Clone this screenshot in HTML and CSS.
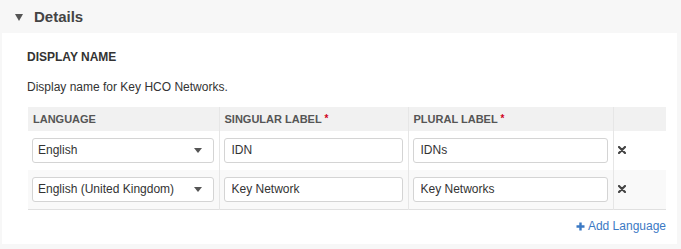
FILE: index.html
```html
<!DOCTYPE html>
<html lang="en">

<head>
  <meta charset="UTF-8">
  <meta name="viewport" content="width=device-width, initial-scale=1.0">
  <title>Details</title>
  <link rel="stylesheet" href="styles.css">
</head>

<body>

  <div class="section-header">
    <span class="caret"></span>
    <span class="section-title">Details</span>
  </div>

  <div class="panel">
    <h3 class="field-title">DISPLAY NAME</h3>
    <p class="field-help">Display name for Key HCO Networks.</p>

    <table class="lang-table">
      <colgroup>
        <col class="col-lang">
        <col class="col-singular">
        <col class="col-plural">
        <col class="col-action">
      </colgroup>
      <thead>
        <tr>
          <th>LANGUAGE</th>
          <th>SINGULAR LABEL <span class="required">*</span></th>
          <th>PLURAL LABEL <span class="required">*</span></th>
          <th></th>
        </tr>
      </thead>
      <tbody>
        <tr>
          <td>
            <div class="select">
              <span>English</span>
              <span class="select-arrow"></span>
            </div>
          </td>
          <td><input class="text-input" type="text" value="IDN"></td>
          <td><input class="text-input" type="text" value="IDNs"></td>
          <td class="action-cell">
            <svg class="remove-icon" width="8" height="8" viewBox="0 0 8 8">
              <path d="M1 1 L7 7 M7 1 L1 7" stroke="#444" stroke-width="2.2" stroke-linecap="round" />
            </svg>
          </td>
        </tr>
        <tr>
          <td>
            <div class="select">
              <span>English (United Kingdom)</span>
              <span class="select-arrow"></span>
            </div>
          </td>
          <td><input class="text-input" type="text" value="Key Network"></td>
          <td><input class="text-input" type="text" value="Key Networks"></td>
          <td class="action-cell">
            <svg class="remove-icon" width="8" height="8" viewBox="0 0 8 8">
              <path d="M1 1 L7 7 M7 1 L1 7" stroke="#444" stroke-width="2.2" stroke-linecap="round" />
            </svg>
          </td>
        </tr>
      </tbody>
    </table>

    <div class="table-footer">
      <a href="#" class="add-link">
        <svg class="plus-icon" width="9" height="9" viewBox="0 0 9 9">
          <path d="M4.5 0.5 V8.5 M0.5 4.5 H8.5" stroke="#3b79c4" stroke-width="2.4" />
        </svg>
        Add Language
      </a>
    </div>
  </div>

</body>

</html>
```

FILE: styles.css
```css
body {
  font-family: 'Liberation Sans', Arial, sans-serif;
  background-color: #f7f7f7;
  margin: 0;
  padding: 0;
  color: #333;
}

.section-header {
  height: 33px;
  display: flex;
  align-items: center;
  padding-left: 15px;
  background-color: #f7f7f7;
}

.caret {
  width: 0;
  height: 0;
  border-left: 4px solid transparent;
  border-right: 4px solid transparent;
  border-top: 7px solid #555;
  margin-right: 11px;
  margin-top: 1px;
}

.section-title {
  font-size: 15px;
  font-weight: bold;
  color: #444;
}

.panel {
  background-color: #fff;
  margin: 0 4px 5px 2px;
  padding: 16px 11px 10px 26px;
}

.field-title {
  margin: 0 0 0 -1px;
  font-size: 12px;
  line-height: 16px;
  font-weight: bold;
  color: #333;
}

.field-help {
  margin: 14px 0 12px -1px;
  font-size: 12px;
  line-height: 16px;
  color: #333;
}

.lang-table {
  width: 638px;
  border-collapse: collapse;
  table-layout: fixed;
}

.col-lang {
  width: 191px;
}

.col-singular {
  width: 189px;
}

.col-plural {
  width: 205px;
}

.col-action {
  width: 53px;
}

.lang-table th {
  height: 24px;
  padding: 0 5px;
  text-align: left;
  font-size: 11px;
  font-weight: bold;
  color: #555;
  background-color: #f1f1f1;
  border-left: 1px solid #e6e6e6;
}

.lang-table th:first-child,
.lang-table td:first-child {
  border-left: none;
}

.required {
  color: #d0021b;
  font-size: 10px;
  vertical-align: top;
}

.lang-table td {
  height: 38px;
  padding: 0 5px 1px 4px;
  border-left: 1px solid #e6e6e6;
}

.lang-table tbody tr:nth-child(2) td {
  background-color: #f9f9f9;
}

.lang-table tbody tr:last-child {
  border-bottom: 1px solid #e0e0e0;
}

.select {
  height: 25px;
  box-sizing: border-box;
  border: 1px solid #d4d4d4;
  border-radius: 3px;
  background-color: #fff;
  display: flex;
  align-items: center;
  justify-content: space-between;
  padding: 0 11px 0 5px;
  font-size: 12px;
  color: #333;
}

.select-arrow {
  width: 0;
  height: 0;
  border-left: 4px solid transparent;
  border-right: 4px solid transparent;
  border-top: 5px solid #555;
}

.text-input {
  width: 100%;
  height: 25px;
  box-sizing: border-box;
  border: 1px solid #d4d4d4;
  border-radius: 3px;
  padding: 0 7px;
  font-family: 'Liberation Sans', Arial, sans-serif;
  font-size: 12px;
  color: #333;
  background-color: #fff;
}

.action-cell {
  padding-left: 6px;
}

.remove-icon {
  display: block;
}

.table-footer {
  display: flex;
  justify-content: flex-end;
  width: 638px;
  margin-top: 8px;
}

.add-link {
  display: flex;
  align-items: center;
  gap: 3px;
  font-size: 12px;
  line-height: 16px;
  color: #3b79c4;
  text-decoration: none;
}
```
